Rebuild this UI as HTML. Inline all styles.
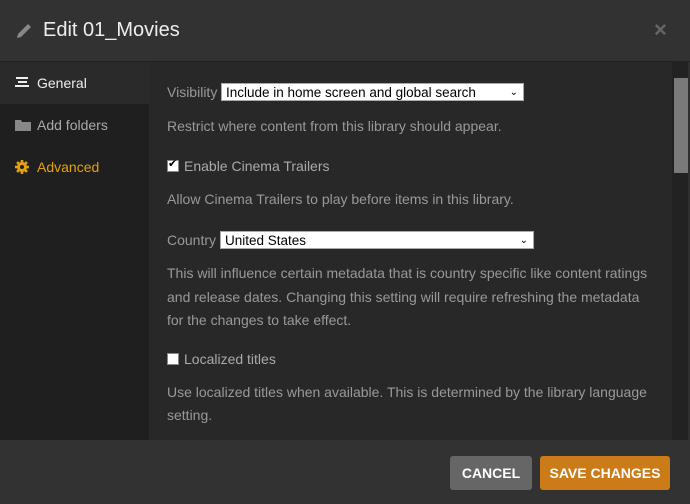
<!DOCTYPE html>
<html><head><style>
body{margin:0;width:690px;height:504px;overflow:hidden;background:#2f2f2f;font-family:"Liberation Sans",sans-serif;position:relative}
.hdr{position:absolute;left:0;top:0;width:690px;height:61px;background:#323232;border-bottom:1px solid #222}
.hdr .t{position:absolute;left:43px;top:19px;font-size:20px;color:#eee}
.side{position:absolute;left:0;top:62px;width:149px;height:378px;background:#1f1f1f}
.item{position:absolute;left:0;width:149px;height:42px;font-size:14px;line-height:42px}
.content{position:absolute;left:149px;top:62px;width:523px;height:378px;background:#282828;color:#999;font-size:14px}
.content div{position:absolute;left:18px}
.sel{position:absolute;background:#fff;color:#000;border:1px solid #aaa;height:18px;line-height:17px;padding-left:4px;font-size:13.5px;box-sizing:border-box}
.cb{display:inline-block;width:10px;height:10px;background:#fff;border:1px solid #888;vertical-align:-1px;margin-right:5px;position:relative}
.foot{position:absolute;left:0;top:440px;width:690px;height:64px;background:#323232}
.btn{position:absolute;top:16px;height:34px;border-radius:3px;color:#fff;font-weight:bold;font-size:14px;line-height:34px;text-align:center}
</style></head><body>
<div class="hdr">
<svg style="position:absolute;left:15px;top:22px" width="18" height="18" viewBox="0 0 18 18"><path d="M2 16l1-4L13 2l3 3L6 15z" fill="#888"/></svg>
<div class="t">Edit 01_Movies</div>
<div style="position:absolute;left:654px;top:17px;color:#666;font-size:22px;font-weight:bold">×</div>
</div>
<div class="side">
<div class="item" style="top:0;background:#2a2a2a;color:#eee"><svg style="position:absolute;left:15px;top:15px" width="15" height="12"><rect x="1" y="0" width="12" height="2" fill="#eee"/><rect x="3" y="4" width="9" height="2" fill="#eee"/><rect x="0" y="8" width="14" height="2" fill="#eee"/></svg><span style="position:absolute;left:37px">General</span></div>
<div class="item" style="top:42px;color:#aaa"><svg style="position:absolute;left:15px;top:15px" width="18" height="13"><path d="M0 1h6l1 2h9v9H0z" fill="#888"/></svg><span style="position:absolute;left:37px">Add folders</span></div>
<div class="item" style="top:84px;color:#e5a00d"><svg style="position:absolute;left:15px;top:14px" width="14" height="14" viewBox="0 0 14 14"><g fill="#e5a00d"><circle cx="7" cy="7" r="5"/><rect x="5.7" y="0" width="2.6" height="14"/><rect x="0" y="5.7" width="14" height="2.6"/><rect x="5.7" y="0" width="2.6" height="14" transform="rotate(45 7 7)"/><rect x="5.7" y="0" width="2.6" height="14" transform="rotate(-45 7 7)"/></g><circle cx="7" cy="7" r="2" fill="#1f1f1f"/></svg><span style="position:absolute;left:37px">Advanced</span></div>
</div>
<div class="content">
<div style="top:22px">Visibility</div>
<span class="sel" style="left:72px;top:21px;width:303px">Include in home screen and global search<span style="position:absolute;right:5px;font-size:10px">⌄</span></span>
<div style="top:56px">Restrict where content from this library should appear.</div>
<div style="top:96px;color:#aaa"><span class="cb"><span style="position:absolute;left:0;top:-4px;font-size:11px;color:#000">✔</span></span>Enable Cinema Trailers</div>
<div style="top:129px">Allow Cinema Trailers to play before items in this library.</div>
<div style="top:170px">Country</div>
<span class="sel" style="left:71px;top:169px;width:314px">United States<span style="position:absolute;right:5px;font-size:10px">⌄</span></span>
<div style="top:200px;line-height:23.5px;width:490px">This will influence certain metadata that is country specific like content ratings and release dates. Changing this setting will require refreshing the metadata for the changes to take effect.</div>
<div style="top:289px;color:#aaa"><span class="cb"></span>Localized titles</div>
<div style="top:319px;line-height:22.5px;width:490px">Use localized titles when available. This is determined by the library language setting.</div>
</div>
<div style="position:absolute;left:672px;top:62px;width:16px;height:378px;background:#222"></div>
<div style="position:absolute;left:674px;top:78px;width:14px;height:95px;background:#7a7a7a"></div>
<div class="foot">
<div class="btn" style="left:450px;width:82px;background:#666">CANCEL</div>
<div class="btn" style="left:540px;width:130px;background:#cc7b19">SAVE CHANGES</div>
</div>
</body></html>
